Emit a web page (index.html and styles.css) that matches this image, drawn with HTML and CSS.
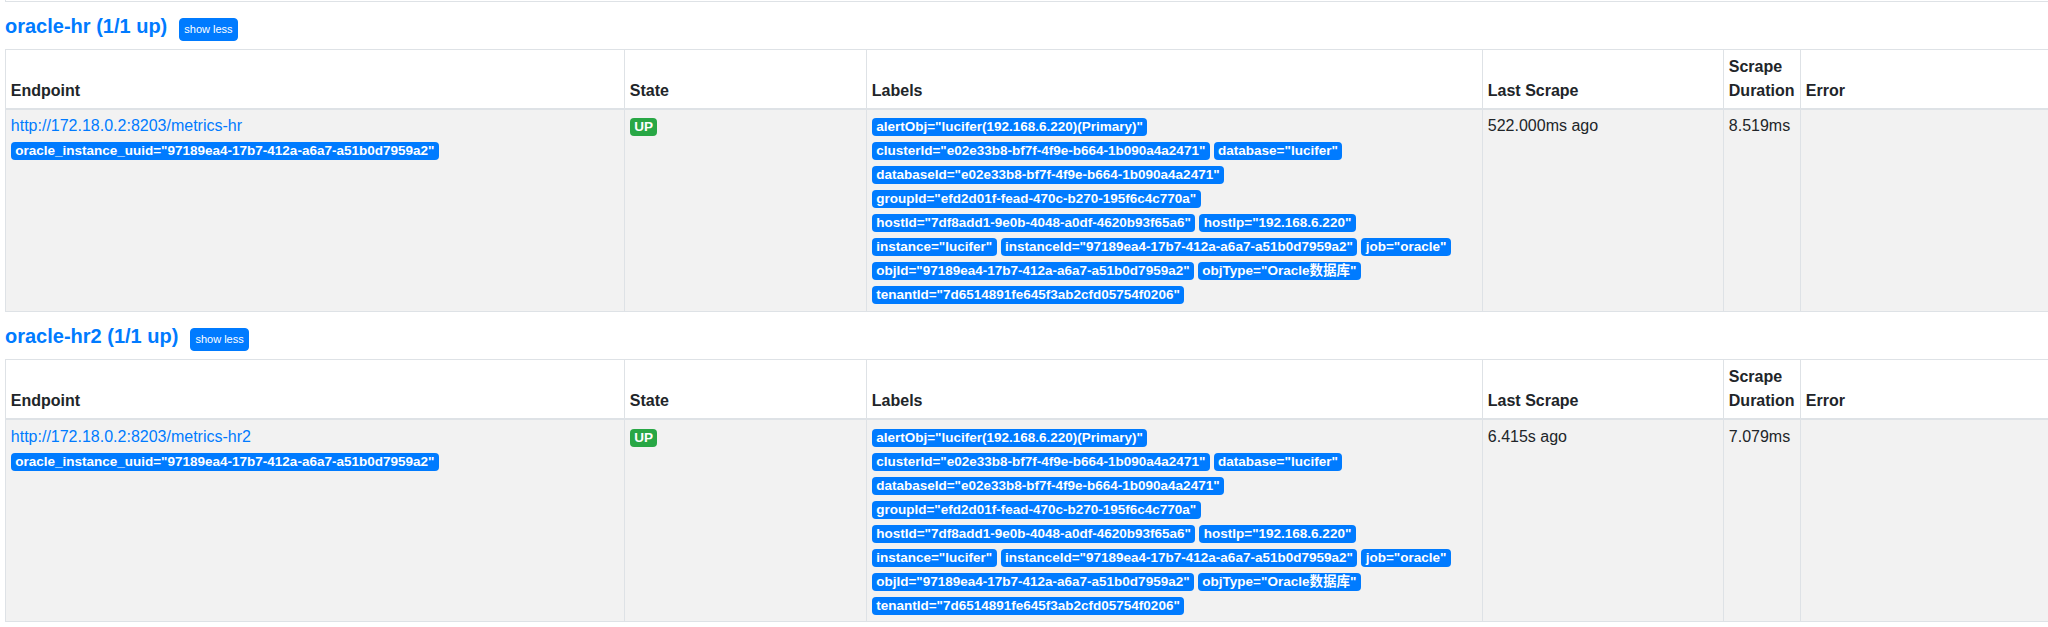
FILE: index.html
```html
<!DOCTYPE html>
<html lang="en">
<head>
    <meta charset="UTF-8">
    <meta name="viewport" content="width=device-width, initial-scale=1.0">
    <title>Targets</title>
    <link rel="stylesheet" href="styles.css">
</head>
<body>
    <div class="fimanterior"></div>

    <div class="pool">
        <h2 class="pooltitulo">
            <a href="#oracle-hr">oracle-hr (1/1 up)</a>
            <button class="btnxs">show less</button>
        </h2>
        <table class="tabela">
            <thead>
                <tr>
                    <th class="colendpoint">Endpoint</th>
                    <th class="colstate">State</th>
                    <th class="collabels">Labels</th>
                    <th class="collast">Last Scrape</th>
                    <th class="coldur">Scrape Duration</th>
                    <th class="colerro">Error</th>
                </tr>
            </thead>
            <tbody>
                <tr>
                    <td>
                        <a href="#" class="link">http://172.18.0.2:8203/metrics-hr</a>
                        <div><span class="badge">oracle_instance_uuid="97189ea4-17b7-412a-a6a7-a51b0d7959a2"</span></div>
                    </td>
                    <td><span class="badge verde">UP</span></td>
                    <td class="labels">
                        <div><span class="badge">alertObj="lucifer(192.168.6.220)(Primary)"</span></div>
                        <div><span class="badge">clusterId="e02e33b8-bf7f-4f9e-b664-1b090a4a2471"</span><span class="badge">database="lucifer"</span></div>
                        <div><span class="badge">databaseId="e02e33b8-bf7f-4f9e-b664-1b090a4a2471"</span></div>
                        <div><span class="badge">groupId="efd2d01f-fead-470c-b270-195f6c4c770a"</span></div>
                        <div><span class="badge">hostId="7df8add1-9e0b-4048-a0df-4620b93f65a6"</span><span class="badge">hostIp="192.168.6.220"</span></div>
                        <div><span class="badge">instance="lucifer"</span><span class="badge">instanceId="97189ea4-17b7-412a-a6a7-a51b0d7959a2"</span><span class="badge">job="oracle"</span></div>
                        <div><span class="badge">objId="97189ea4-17b7-412a-a6a7-a51b0d7959a2"</span><span class="badge">objType="Oracle数据库"</span></div>
                        <div><span class="badge">tenantId="7d6514891fe645f3ab2cfd05754f0206"</span></div>
                    </td>
                    <td>522.000ms ago</td>
                    <td>8.519ms</td>
                    <td></td>
                </tr>
            </tbody>
        </table>
    </div>

    <div class="pool">
        <h2 class="pooltitulo">
            <a href="#oracle-hr2">oracle-hr2 (1/1 up)</a>
            <button class="btnxs">show less</button>
        </h2>
        <table class="tabela">
            <thead>
                <tr>
                    <th class="colendpoint">Endpoint</th>
                    <th class="colstate">State</th>
                    <th class="collabels">Labels</th>
                    <th class="collast">Last Scrape</th>
                    <th class="coldur">Scrape Duration</th>
                    <th class="colerro">Error</th>
                </tr>
            </thead>
            <tbody>
                <tr>
                    <td>
                        <a href="#" class="link">http://172.18.0.2:8203/metrics-hr2</a>
                        <div><span class="badge">oracle_instance_uuid="97189ea4-17b7-412a-a6a7-a51b0d7959a2"</span></div>
                    </td>
                    <td><span class="badge verde">UP</span></td>
                    <td class="labels">
                        <div><span class="badge">alertObj="lucifer(192.168.6.220)(Primary)"</span></div>
                        <div><span class="badge">clusterId="e02e33b8-bf7f-4f9e-b664-1b090a4a2471"</span><span class="badge">database="lucifer"</span></div>
                        <div><span class="badge">databaseId="e02e33b8-bf7f-4f9e-b664-1b090a4a2471"</span></div>
                        <div><span class="badge">groupId="efd2d01f-fead-470c-b270-195f6c4c770a"</span></div>
                        <div><span class="badge">hostId="7df8add1-9e0b-4048-a0df-4620b93f65a6"</span><span class="badge">hostIp="192.168.6.220"</span></div>
                        <div><span class="badge">instance="lucifer"</span><span class="badge">instanceId="97189ea4-17b7-412a-a6a7-a51b0d7959a2"</span><span class="badge">job="oracle"</span></div>
                        <div><span class="badge">objId="97189ea4-17b7-412a-a6a7-a51b0d7959a2"</span><span class="badge">objType="Oracle数据库"</span></div>
                        <div><span class="badge">tenantId="7d6514891fe645f3ab2cfd05754f0206"</span></div>
                    </td>
                    <td>6.415s ago</td>
                    <td>7.079ms</td>
                    <td></td>
                </tr>
            </tbody>
        </table>
    </div>
</body>
</html>
```

FILE: styles.css
```css
html, body {
    margin: 0;
    overflow: hidden;
}

body {
    padding-left: 5px;
    font-family: "Liberation Sans", Arial, "Noto Sans CJK SC", sans-serif;
    font-size: 16px;
    line-height: 24px;
    color: #212529;
    background: #fff;
}

.fimanterior {
    height: 1px;
    border-left: 1px solid #dee2e6;
    border-bottom: 1px solid #dee2e6;
}

.pooltitulo {
    display: flex;
    align-items: baseline;
    height: 24px;
    margin: 12px 0 11px 0;
    font-size: 20px;
    line-height: 24px;
    font-weight: bold;
}

.pooltitulo a {
    color: #007bff;
    text-decoration: none;
}

.btnxs {
    margin-left: 12px;
    padding: 3px 4px;
    font-family: "Liberation Sans", Arial, sans-serif;
    font-size: 11px;
    line-height: 15px;
    color: #fff;
    background: #007bff;
    border: 1px solid #007bff;
    border-radius: 4px;
}

.tabela {
    width: calc(100% + 2px);
    table-layout: fixed;
    border-collapse: collapse;
}

.tabela th,
.tabela td {
    box-sizing: border-box;
    padding: 4.8px;
    border: 1px solid #dee2e6;
    text-align: left;
}

.tabela th {
    vertical-align: bottom;
    border-bottom: 2px solid #dee2e6;
    font-weight: bold;
    background: #fff;
}

.tabela td {
    vertical-align: top;
}

.tabela tbody tr:nth-of-type(odd) {
    background: #f2f2f2;
}

.colendpoint { width: 619px; }
.colstate { width: 242px; }
.collabels { width: 616px; }
.collast { width: 241px; }
.coldur { width: 77px; }

.link {
    color: #007bff;
    text-decoration: none;
}

.badge {
    display: inline-block;
    margin-right: 4px;
    padding: 3px 4.4px;
    font-size: 13.5px;
    line-height: 12px;
    font-weight: bold;
    color: #fff;
    background: #007bff;
    border-radius: 4px;
    white-space: nowrap;
}

.verde {
    background: #28a745;
}
```
